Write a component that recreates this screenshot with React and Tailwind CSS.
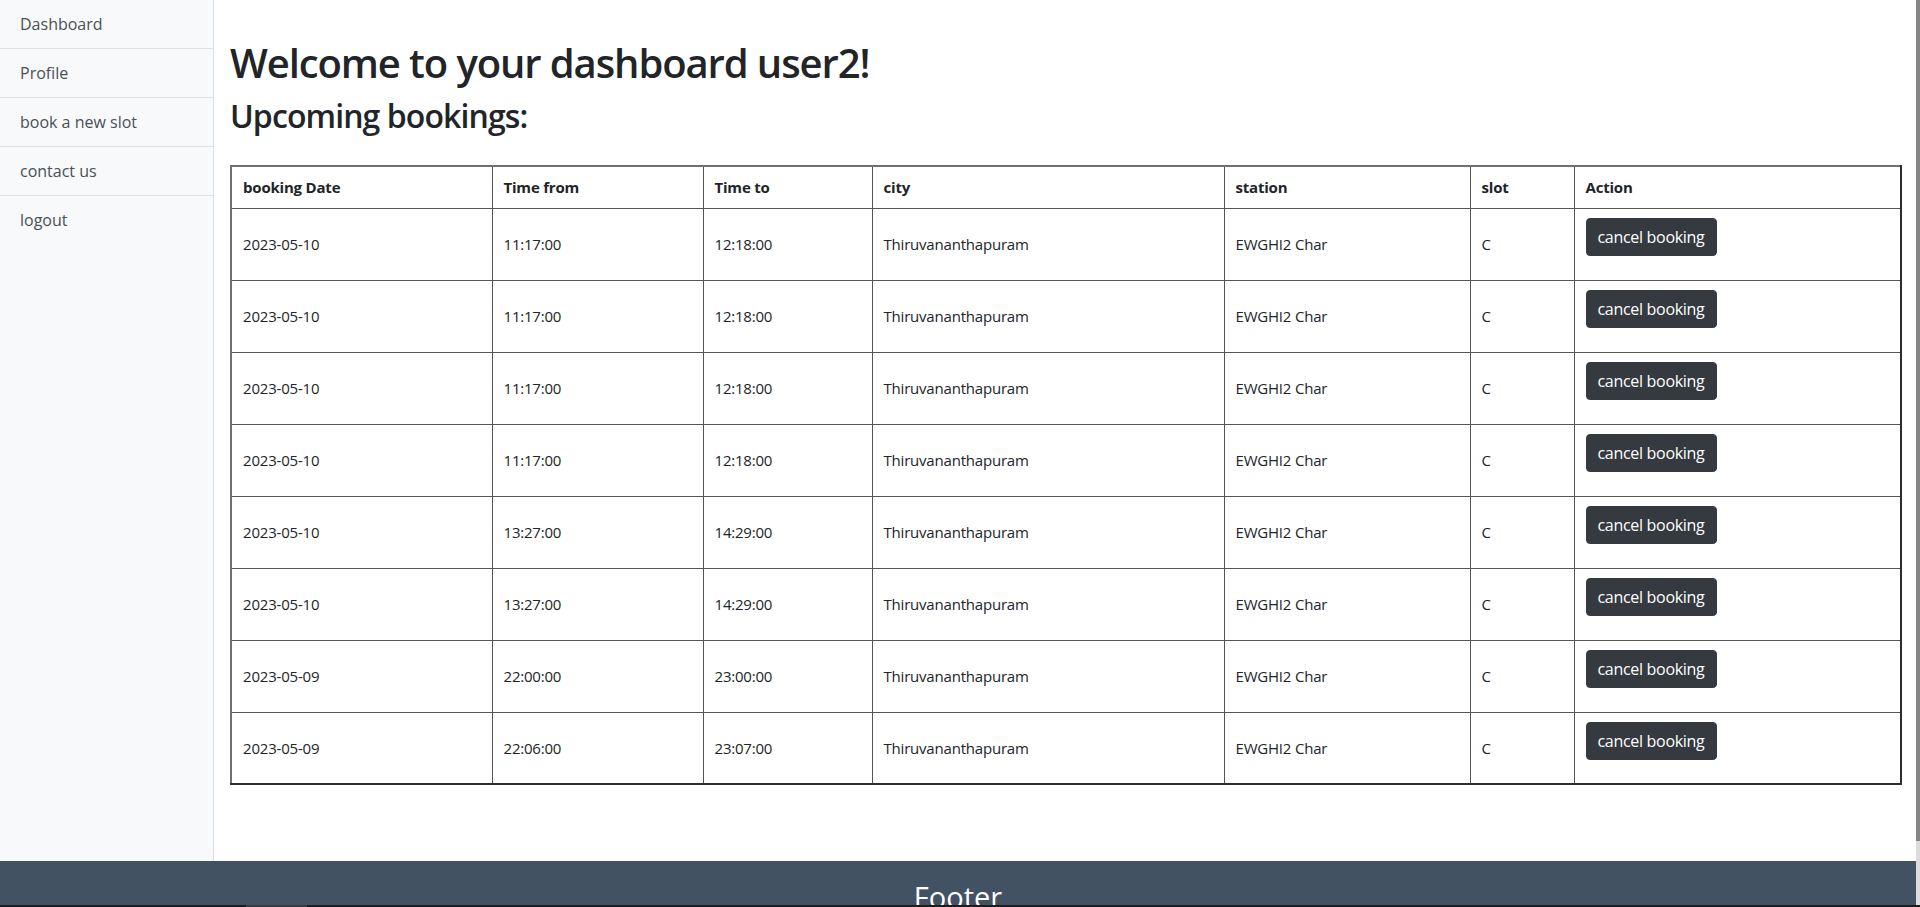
import React from 'react'

const NAV = ['Dashboard', 'Profile', 'book a new slot', 'contact us', 'logout']

const BOOKINGS = [
  { date: '2023-05-10', from: '11:17:00', to: '12:18:00' },
  { date: '2023-05-10', from: '11:17:00', to: '12:18:00' },
  { date: '2023-05-10', from: '11:17:00', to: '12:18:00' },
  { date: '2023-05-10', from: '11:17:00', to: '12:18:00' },
  { date: '2023-05-10', from: '13:27:00', to: '14:29:00' },
  { date: '2023-05-10', from: '13:27:00', to: '14:29:00' },
  { date: '2023-05-09', from: '22:00:00', to: '23:00:00' },
  { date: '2023-05-09', from: '22:06:00', to: '23:07:00' },
]

const COLS = [
  { label: 'booking Date', w: 'w-[261px]' },
  { label: 'Time from', w: 'w-[211px]' },
  { label: 'Time to', w: 'w-[169px]' },
  { label: 'city', w: 'w-[352px]' },
  { label: 'station', w: 'w-[246px]' },
  { label: 'slot', w: 'w-[104px]' },
  { label: 'Action', w: 'w-[327px]' },
]

export default function App() {
  return (
    <div className="font-['Open_Sans','Noto_Sans',sans-serif] text-[#212529]">
      <div className="flex h-[905px]">
        <div className="flex-1 min-w-0 overflow-hidden">
          <div className="flex min-h-[861px]">
            {/* Sidebar */}
            <aside className="w-[214px] shrink-0 bg-[#f8f9fa] border-r border-[#dee2e6]">
              {NAV.map((item, i) => (
                <div
                  key={item}
                  className={`px-[20px] py-[12px] text-[16px] leading-[24px] text-[#495057] ${
                    i < NAV.length - 1 ? 'border-b border-[#dee2e6]' : ''
                  }`}
                >
                  {item}
                </div>
              ))}
            </aside>

            {/* Main */}
            <main className="flex-1 min-w-0 pl-[16px] pr-[16px] pt-[39px]">
              <h1 className="text-[40px] leading-[48px] font-semibold tracking-[-1.1px] mb-[8px]">Welcome to your dashboard user2!</h1>
              <h2 className="text-[32px] leading-[38px] font-semibold tracking-[-0.9px] pt-[2px] mb-[30px]">Upcoming bookings:</h2>

              <table className="w-full table-fixed border-collapse border-2 border-t-[#707070] border-l-[#707070] border-b-[#2e2e2e] border-r-[#2e2e2e] text-[15px] tracking-[-0.2px]">
                <thead>
                  <tr>
                    {COLS.map((c) => (
                      <th
                        key={c.label}
                        className={`${c.w} h-[42px] px-[11px] text-left align-middle font-bold border border-[#555555]`}
                      >
                        {c.label}
                      </th>
                    ))}
                  </tr>
                </thead>
                <tbody>
                  {BOOKINGS.map((b, i) => (
                    <tr key={i}>
                      <td className="h-[72px] px-[11px] align-middle border border-[#555555]">{b.date}</td>
                      <td className="px-[11px] align-middle border border-[#555555]">{b.from}</td>
                      <td className="px-[11px] align-middle border border-[#555555]">{b.to}</td>
                      <td className="px-[11px] align-middle border border-[#555555]">Thiruvananthapuram</td>
                      <td className="px-[11px] align-middle border border-[#555555]">EWGHI2 Char</td>
                      <td className="px-[11px] align-middle border border-[#555555]">C</td>
                      <td className="px-[11px] pt-[9px] align-top border border-[#555555]">
                        <button className="bg-[#343a40] border border-[#343a40] text-white text-[16px] leading-[24px] tracking-[-0.3px] px-[11px] py-[6px] rounded-[4px]">
                          cancel booking
                        </button>
                      </td>
                    </tr>
                  ))}
                </tbody>
              </table>
            </main>
          </div>

          <footer className="bg-[#435263] h-[113px] pt-[19px] text-center text-white">
            <p className="text-[29px] leading-[34px]">Footer</p>
          </footer>
        </div>

        {/* scrollbar */}
        <div className="w-[4px] shrink-0 flex flex-col bg-[#dcdcdc]">
          <div className="h-[841px] bg-[#858585]" />
        </div>
      </div>
      <div className="h-[2px] bg-[#1c1c1c] flex">
        <div className="ml-[246px] w-[61px] bg-[#3c3c3c]" />
      </div>
    </div>
  )
}
